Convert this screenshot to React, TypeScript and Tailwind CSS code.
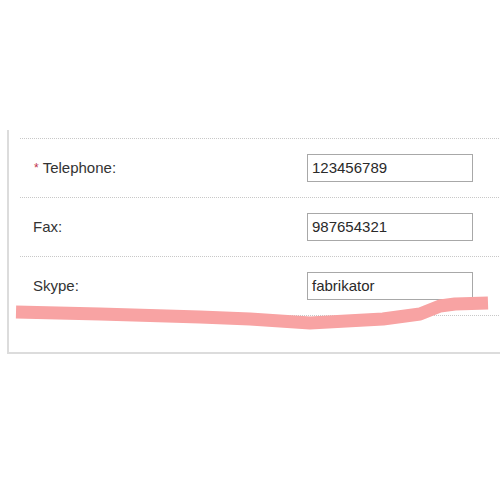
import React from "react";

const rows = [
  { label: "Telephone:", value: "123456789", required: true },
  { label: "Fax:", value: "987654321", required: false },
  { label: "Skype:", value: "fabrikator", required: false },
];

export default function App() {
  return (
    <div
      className="relative w-[500px] h-[500px] overflow-hidden bg-white pt-[130px]"
      style={{ fontFamily: '"Liberation Sans", Arial, sans-serif' }}
    >
      <div className="ml-[7px] w-[560px] border-l-2 border-b-2 border-[#dcdcdc] pt-[8px] pl-[11px] pb-[36px]">
        {rows.map((r) => (
          <div
            key={r.label}
            className="flex items-center h-[59px] border-t border-dotted border-[#c8c8c8]"
          >
            <div className="w-[287px] pl-[13px] text-[15px] text-[#333]">
              {r.required ? (
                <span className="text-[#c0304a] text-[12px] ml-[1px] mr-[4px] relative -top-[1px]">*</span>
              ) : null}
              {r.label}
            </div>
            <div className="w-[166px] h-[28px] border border-[#a8a8a8] flex items-center pl-[4px] text-[15px] text-[#2a2a2a]">
              {r.value}
            </div>
          </div>
        ))}
        <div className="border-t border-dotted border-[#c8c8c8]" />
      </div>
      <svg
        className="absolute left-0 top-0 pointer-events-none"
        width="500"
        height="500"
        viewBox="0 0 500 500"
      >
        <path
          d="M16 312 L100 314 L200 317 L250 319 L310 323 L383 319 L420 314 L440 306 L455 304 L488 303"
          fill="none"
          stroke="#f8a3a3"
          strokeWidth="13"
          strokeLinejoin="round"
        />
      </svg>
    </div>
  );
}
